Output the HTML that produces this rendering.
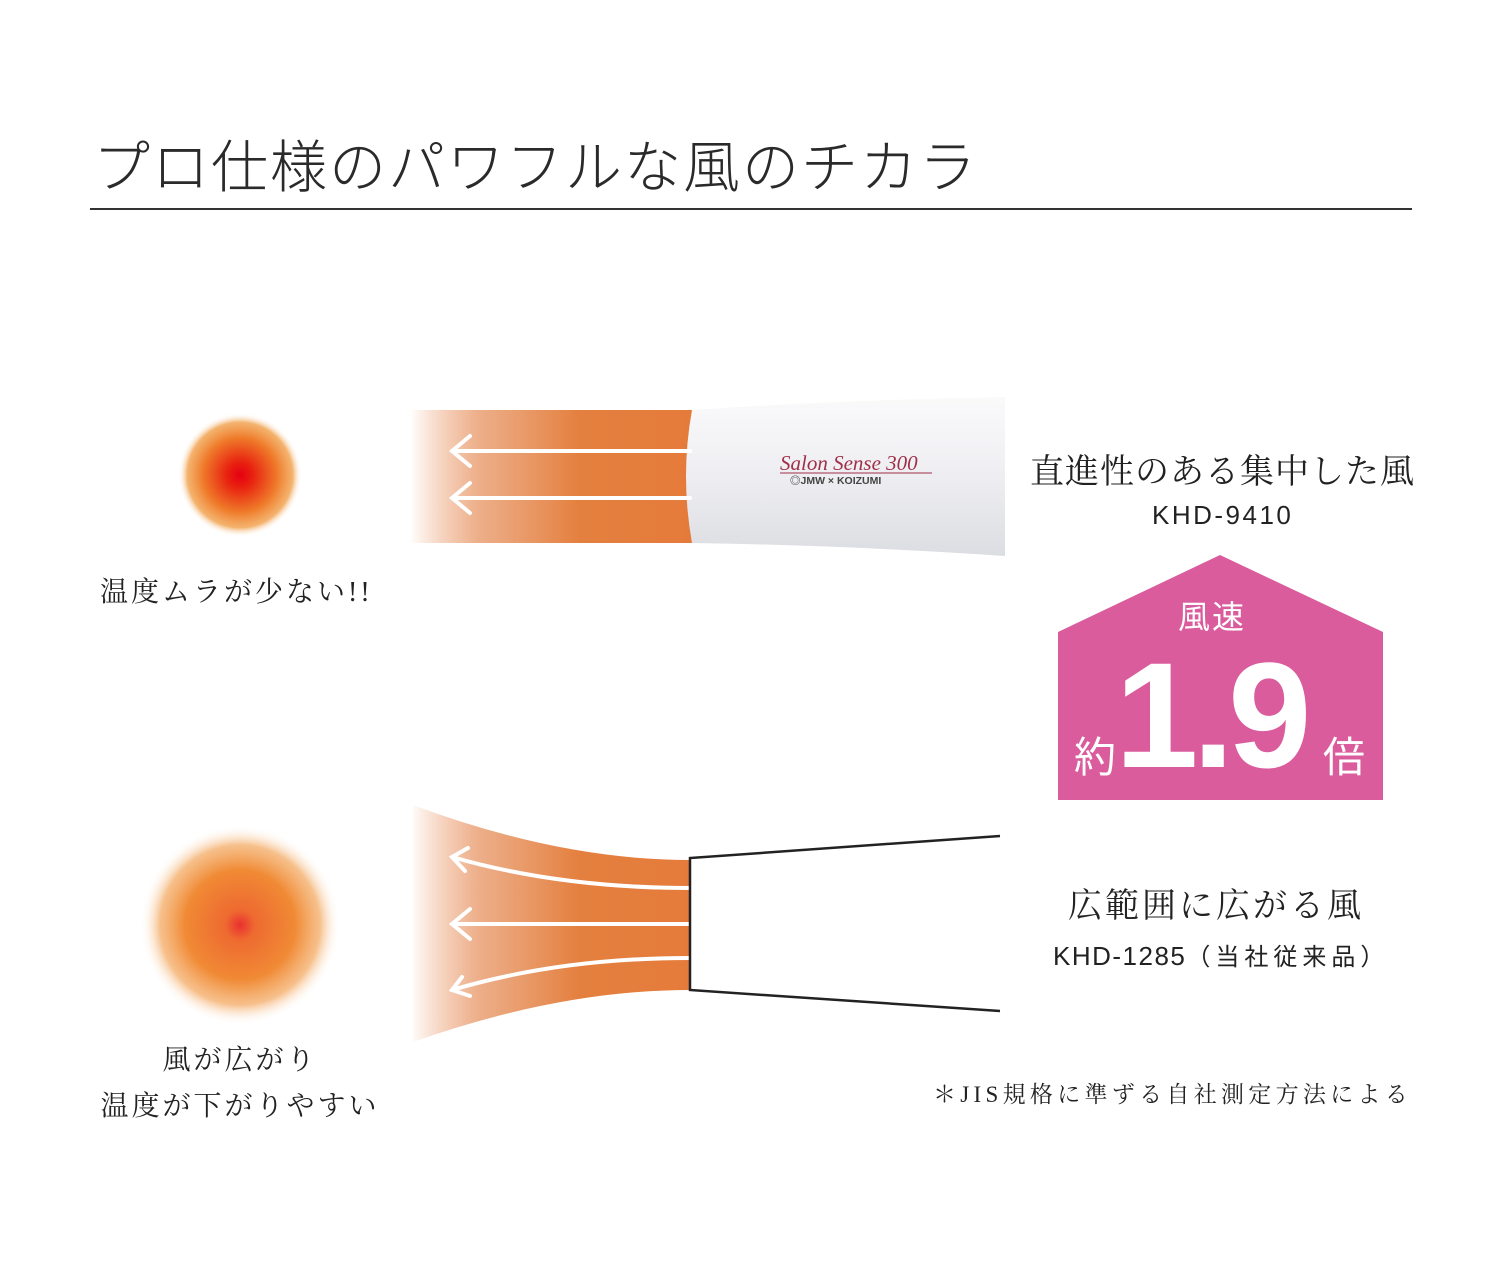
<!DOCTYPE html>
<html><head><meta charset="utf-8"><style>
body{margin:0;width:1500px;height:1276px;background:#fff;position:relative;overflow:hidden;font-family:"Liberation Sans","Noto Sans CJK JP",sans-serif;color:#222}
.t{position:absolute;white-space:nowrap}
.serif{font-family:"Liberation Serif","Noto Serif CJK SC",serif}
</style></head><body>
<div class="t" style="left:93px;top:122px;font-size:57px;font-weight:300;letter-spacing:2px;color:#2a2a2a">プロ仕様のパワフルな風のチカラ</div>
<div style="position:absolute;left:90px;top:208px;width:1322px;height:2px;background:#333"></div>

<svg style="position:absolute;left:0;top:0" width="1500" height="1276">
<defs>
<linearGradient id="og" x1="410" x2="690" y1="0" y2="0" gradientUnits="userSpaceOnUse">
<stop offset="0" stop-color="#e57c3f" stop-opacity="0"/><stop offset="0.25" stop-color="#e8996a" stop-opacity="0.8"/><stop offset="0.6" stop-color="#e4803f"/><stop offset="1" stop-color="#e57b3b"/></linearGradient>
<linearGradient id="dg" x1="0" x2="0" y1="0" y2="1"><stop offset="0" stop-color="#fafafb"/><stop offset="0.5" stop-color="#eeeef2"/><stop offset="1" stop-color="#dcdde2"/></linearGradient>
<radialGradient id="c1"><stop offset="0" stop-color="#e60012"/><stop offset="0.2" stop-color="#e8200f"/><stop offset="0.6" stop-color="#ef7a2a"/><stop offset="0.85" stop-color="#f1a04a" stop-opacity="0.8"/><stop offset="1" stop-color="#fff" stop-opacity="0"/></radialGradient>
<radialGradient id="c2"><stop offset="0" stop-color="#e83030"/><stop offset="0.15" stop-color="#ee6a30"/><stop offset="0.55" stop-color="#f08a35"/><stop offset="0.8" stop-color="#f3a55a" stop-opacity="0.7"/><stop offset="1" stop-color="#fff" stop-opacity="0"/></radialGradient>
</defs>
<circle cx="240" cy="475" r="62" fill="url(#c1)"/>
<circle cx="240" cy="925" r="100" fill="url(#c2)"/>
<rect x="410" y="410" width="282" height="133" fill="url(#og)"/>
<path d="M692 410 Q840 400 1005 397 L1005 556 Q840 545 692 543 Q680 476 692 410Z" fill="url(#dg)"/>
<g stroke="#fff" stroke-width="4" fill="none" stroke-linecap="round">
<path d="M690 451H452M470 436L452 451L470 466"/>
<path d="M690 498H452M470 483L452 498L470 513"/>
</g>
<text x="780" y="470" font-family="Liberation Serif,serif" font-style="italic" font-size="21" fill="#a0304a">Salon Sense 300</text>
<line x1="780" y1="473" x2="932" y2="473" stroke="#a0304a" stroke-width="1"/>
<text x="790" y="484" font-size="10.5" font-weight="bold" fill="#444">◎JMW × KOIZUMI</text>

<path d="M413 805 Q560 860 690 860 L690 990 Q560 990 413 1042Z" fill="url(#og)"/>
<g stroke="#fff" stroke-width="4" fill="none" stroke-linecap="round">
<path d="M690 888 Q560 888 452 857M468 848L452 857L465 871"/>
<path d="M690 924H452M470 909L452 924L470 939"/>
<path d="M690 958 Q560 958 452 990M462 977L452 990L470 996"/>
</g>
<path d="M1000 836L690 858V990L1000 1011" stroke="#222" stroke-width="2.5" fill="#fff"/>
<path d="M1220 555L1383 632V800H1058V632Z" fill="#da5c9c"/>
</svg>

<div class="t serif" style="left:100px;top:570px;font-size:28px;letter-spacing:3px">温度ムラが少ない!!</div>
<div class="t serif" style="left:0;width:480px;text-align:center;top:1038px;font-size:28px;letter-spacing:3px;line-height:46px">風が広がり<br>温度が下がりやすい</div>

<div class="t serif" style="left:1030px;top:444px;font-size:34px;letter-spacing:1px">直進性のある集中した風</div>
<div class="t" style="left:1152px;top:500px;font-size:26px;letter-spacing:2.5px">KHD-9410</div>
<div class="t" style="left:1178px;top:592px;font-size:32px;color:#fff;letter-spacing:2px">風速</div>
<div class="t" style="left:1074px;top:724px;font-size:42px;color:#fff">約</div>
<div class="t" style="left:1115px;top:630px;font-size:150px;font-weight:bold;color:#fff;letter-spacing:-6px;line-height:170px">1.9</div>
<div class="t" style="left:1323px;top:724px;font-size:42px;color:#fff">倍</div>

<div class="t serif" style="left:1068px;top:878px;font-size:34px;letter-spacing:3px">広範囲に広がる風</div>
<div class="t" style="left:1053px;top:937px;font-size:26px;letter-spacing:1.5px">KHD-1285<span style="font-size:24px;letter-spacing:5px">（当社従来品）</span></div>
<div class="t serif" style="left:933px;top:1076px;font-size:23px;letter-spacing:4.3px">＊JIS規格に準ずる自社測定方法による</div>
</body></html>
